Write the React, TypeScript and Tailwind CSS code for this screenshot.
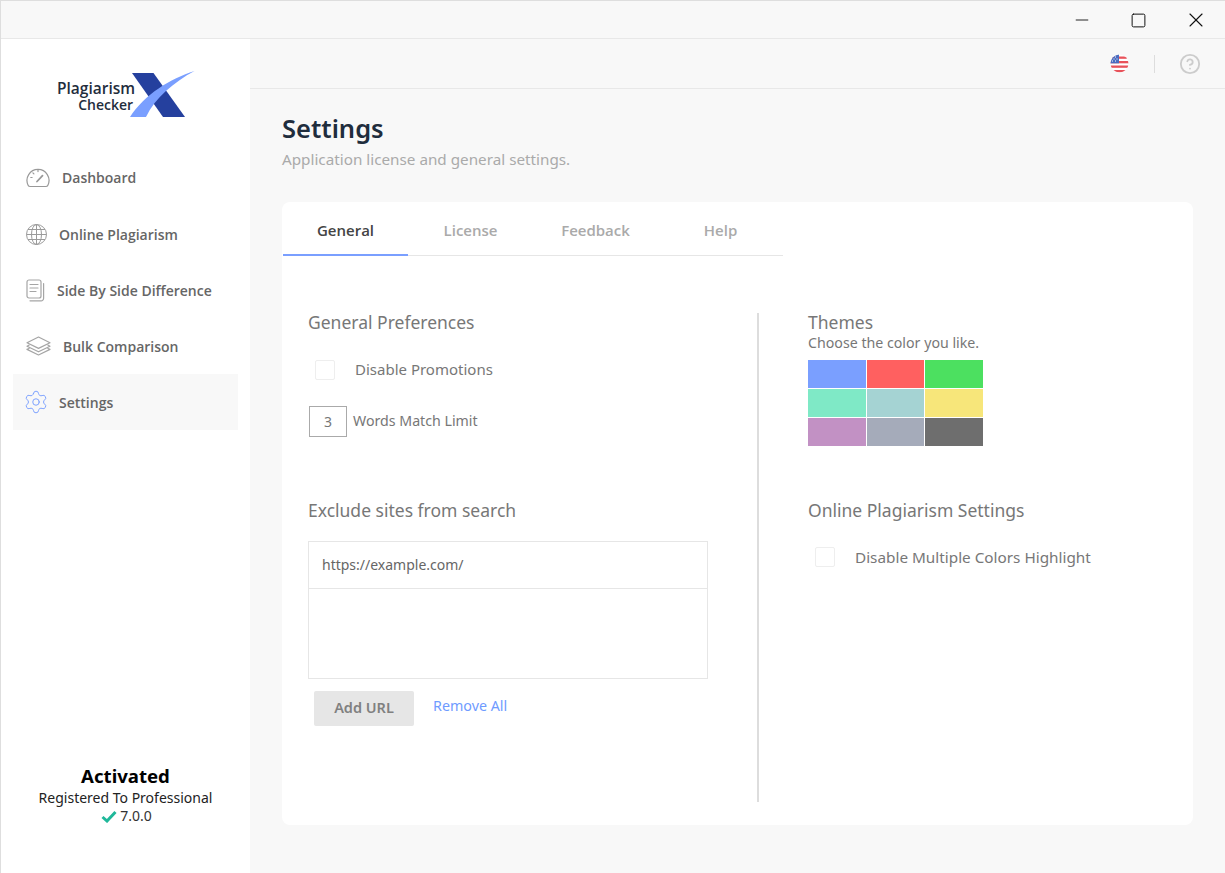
import { Settings as Gear, CircleHelp, Minus, Square, X } from "lucide-react";

const font = "[font-family:'Open_Sans','Noto_Sans',sans-serif]";
const ui = "[font-family:'Noto_Sans','Open_Sans',sans-serif]";

function GaugeIcon() {
  return (
    <svg width="24" height="22" viewBox="0 0 24 22" fill="none" stroke="#999999" strokeWidth="1.2" strokeLinecap="round">
      <path d="M4.2 20.5h15.6c1 0 1.7-.4 2.1-1.3A11 11 0 1 0 2.1 19.2c.4.9 1.1 1.3 2.1 1.3z" />
      <path d="M11 15.5l5.5-5.8" strokeWidth="1.8" />
      <path d="M12 4.2v1.4M4.8 11.500h1.3M6.900 6.900l1 1" />
    </svg>
  );
}

function GlobeIcon() {
  return (
    <svg width="21" height="21" viewBox="0 0 21 21" fill="none" stroke="#9a9a9a" strokeWidth="1">
      <circle cx="10.5" cy="10.5" r="10" />
      <ellipse cx="10.5" cy="10.5" rx="5" ry="10" />
      <path d="M10.5.5v20M.5 10.500h20M2 5.500h17M2 15.500h17" />
    </svg>
  );
}

function DocsIcon() {
  return (
    <svg width="19" height="23" viewBox="0 0 19 23" fill="none" stroke="#a5a5a5" strokeWidth="1.2" strokeLinecap="round" strokeLinejoin="round">
      <rect x="1" y="1" width="14" height="18" rx="2" />
      <path d="M17.600 4.500v14.800a2.500 2.500 0 0 1-2.500 2.500H4" />
      <path d="M4 5.500h8M4 9h8M4 12.500h6" />
    </svg>
  );
}

function LayersIcon() {
  return (
    <svg width="25" height="20" viewBox="0 0 25 20" fill="none" stroke="#a5a5a5" strokeWidth="1.2" strokeLinejoin="round">
      <path d="M12.500 1L24 6.800l-11.500 5.600L1 6.800z" />
      <path d="M3.600 8.800L1 10.200l11.500 5.600L24 10.200l-2.600-1.400" />
      <path d="M3.600 12.200L1 13.400 12.500 19 24 13.400l-2.600-1.200" />
    </svg>
  );
}

function Flag() {
  return (
    <svg width="19" height="19" viewBox="0 0 19 19">
      <defs>
        <clipPath id="flag-circle">
          <circle cx="9.500" cy="9.500" r="9" />
        </clipPath>
      </defs>
      <g clipPath="url(#flag-circle)">
        <rect width="19" height="19" fill="#fff" />
        <rect y="2.500" width="19" height="2.300" fill="#e8525a" />
        <rect y="7" width="19" height="2.300" fill="#e8525a" />
        <rect y="11.500" width="19" height="2.300" fill="#e8525a" />
        <rect y="16" width="19" height="2.300" fill="#e8525a" />
        <rect x="0" y="0" width="9" height="9.300" fill="#4a6cc0" />
        <path d="M2 3h1M5 3h1M3.500 5h1M6.500 5h1M2 7h1M5 7h1" stroke="#fff" strokeWidth="1" />
      </g>
    </svg>
  );
}

function Logo() {
  return (
    <div className="flex h-[111px] pl-[56px] pt-[31px]">
      <div className={`flex flex-col items-end pt-[10px] text-[#1f2d3d] font-semibold ${font}`}>
        <span className="h-[17px] text-[15.5px] leading-[17px]">Plagiarism</span>
        <span className="mr-[2px] h-[16px] text-[14px] leading-[16px]">Checker</span>
      </div>
      <svg className="-ml-[5px] shrink-0" width="65" height="48" viewBox="0 0 65 48">
        <path d="M2 3h21.500L55 47H33z" fill="#25409e" />
        <path d="M64.500 1C40 9 15 24 0 47h16C25 28 44 12 64.500 1z" fill="#7a9fff" />
      </svg>
    </div>
  );
}

const nav = [
  { label: "Dashboard", icon: <GaugeIcon />, iconW: "w-[36px]", extra: "pb-[2px]" },
  { label: "Online Plagiarism", icon: <GlobeIcon />, iconW: "w-[33px]", extra: "" },
  { label: "Side By Side Difference", icon: <DocsIcon />, iconW: "w-[31px]", extra: "" },
  { label: "Bulk Comparison", icon: <LayersIcon />, iconW: "w-[37px]", extra: "" },
  {
    label: "Settings",
    icon: <Gear className="-ml-[3px]" size={26} strokeWidth={0.9} color="#7a9fff" />,
    iconW: "w-[33px]",
    extra: "bg-[#f8f8f8]",
  },
];

function Sidebar() {
  return (
    <aside className="flex h-full w-[249px] shrink-0 flex-col bg-white">
      <Logo />
      <nav className="flex flex-col pl-[12px] pr-[12px]">
        {nav.map((n) => (
          <div key={n.label} className={`flex h-[56px] items-center pl-[13px] ${n.extra}`}>
            <span className={`flex shrink-0 items-center ${n.iconW}`}>{n.icon}</span>
            <span className={`text-[14px] font-semibold text-[#666666] ${font}`}>{n.label}</span>
          </div>
        ))}
      </nav>
      <div className={`mt-auto flex flex-col items-center pb-[48px] ${ui}`}>
        <span className="mb-[1px] h-[24px] text-[18.6px] font-bold leading-[24px] text-black">Activated</span>
        <span className="h-[18px] text-[14px] leading-[18px] text-[#222222]">Registered To Professional</span>
        <span className="ml-[2px] flex h-[18px] items-center gap-[3px] text-[14px] leading-[18px] text-[#333333]">
          <svg width="16" height="13" viewBox="0 0 16 13">
            <path d="M1.500 7l4.500 4 8.500-9" fill="none" stroke="#1fb89a" strokeWidth="3" />
          </svg>
          7.0.0
        </span>
      </div>
    </aside>
  );
}

function Check() {
  return <span className="h-[20px] w-[20px] shrink-0 rounded-[2px] border border-[#eeeeee] bg-white" />;
}

function Heading({ children }: { children: string }) {
  return <div className="h-[24px] text-[17.5px] leading-[22px] text-[#777777]">{children}</div>;
}

const themes = [
  "bg-[#7a9fff]", "bg-[#ff6060]", "bg-[#4ce060]",
  "bg-[#7fe9c6]", "bg-[#a5d3d3]", "bg-[#f7e67a]",
  "bg-[#c291c4]", "bg-[#a5abba]", "bg-[#6e6e6e]",
];

function General() {
  return (
    <div className={`mt-[57px] flex ${ui}`}>
      <div className="ml-[26px] w-[449px] shrink-0 -mt-[2px]">
        <Heading>General Preferences</Heading>
        <div className="ml-[7px] mt-[25px] flex h-[20px] items-center">
          <Check />
          <span className="ml-[20px] pb-[2px] text-[15px] text-[#777777]">Disable Promotions</span>
        </div>
        <div className="ml-[1px] mt-[26px] flex h-[31px] items-center">
          <div className="flex h-[31px] w-[38px] items-center justify-center border border-[#aaaaaa] text-[14px] text-[#777777]">3</div>
          <span className="ml-[6px] pb-[2px] text-[14.2px] text-[#777777]">Words Match Limit</span>
        </div>
        <div className="mt-[62px]">
          <Heading>Exclude sites from search</Heading>
        </div>
        <div className="mt-[18px] h-[138px] w-[400px] border border-[#e6e6e6]">
          <div className="flex h-[47px] items-center border-b border-[#e6e6e6] pb-[2px] pl-[13px] text-[14px] text-[#666666]">https://example.com/</div>
        </div>
        <div className="ml-[6px] mt-[12px] flex items-start">
          <button className="h-[35px] w-[100px] rounded-[2px] bg-[#e6e6e6] pb-[2px] text-[14.5px] font-semibold text-[#808080]">Add URL</button>
          <span className="ml-[19px] mt-[4px] text-[14.3px] text-[#6f9bff]">Remove All</span>
        </div>
      </div>
      <div className="h-[489px] w-[2px] shrink-0 bg-[#dddddd]" />
      <div className="ml-[49px] -mt-[2px] flex-1">
        <Heading>Themes</Heading>
        <div className="h-[16px] text-[14.2px] leading-[16px] text-[#777777]">Choose the color you like.</div>
        <div className="mt-[9px] grid w-[175px] grid-cols-[58px_57px_58px] grid-rows-[28px_28px_28px] gap-[1px]">
          {themes.map((c) => (
            <div key={c} className={c} />
          ))}
        </div>
        <div className="mt-[53px]">
          <Heading>Online Plagiarism Settings</Heading>
        </div>
        <div className="ml-[7px] mt-[24px] flex h-[20px] items-center">
          <Check />
          <span className="ml-[20px] text-[15.3px] text-[#777777]">Disable Multiple Colors Highlight</span>
        </div>
      </div>
    </div>
  );
}

function Tabs() {
  const tabs = ["General", "License", "Feedback", "Help"];
  return (
    <div className="ml-[1px] flex h-[54px] w-[500px] border-b border-[#e6e6e6]">
      {tabs.map((t, i) => (
        <div
          key={t}
          className={`flex h-[54px] w-[125px] items-center justify-center border-b-2 pt-[4px] text-[15px] font-semibold ${font} ${
            i === 0 ? "border-[#7a9fff] text-[#444444]" : "border-transparent text-[#aaaaaa]"
          }`}
        >
          {t}
        </div>
      ))}
    </div>
  );
}

export default function App() {
  return (
    <div className="flex h-[873px] w-[1225px] flex-col overflow-hidden border-t border-l border-[#dedede] bg-[#f8f8f8]">
      <header className="flex h-[38px] shrink-0 items-center justify-end border-b border-[#e8e8e8] pr-[17px] pt-[1px]">
        <Minus size={20} strokeWidth={1.1} color="#111" />
        <Square className="ml-[38px]" size={17} strokeWidth={1.4} color="#111" />
        <X className="ml-[37px]" size={24} strokeWidth={1.1} color="#111" />
      </header>
      <div className="flex min-h-0 flex-1">
        <Sidebar />
        <main className="flex min-w-0 flex-1 flex-col">
          <div className="flex h-[50px] shrink-0 items-center justify-end border-b border-[#e8e8e8] pr-[24px]">
            <Flag />
            <span className="ml-[25px] h-[18px] w-[1px] bg-[#dddddd]" />
            <CircleHelp className="ml-[24px]" size={22} strokeWidth={2} color="#cccccc" />
          </div>
          <div className="px-[32px]">
            <h1 className={`mt-[20px] h-[38px] text-[25.5px] font-semibold leading-[38px] text-[#1f2d3d] ${ui}`}>Settings</h1>
            <p className={`mt-[2px] h-[20px] text-[15.25px] leading-[20px] text-[#aaaaaa] ${ui}`}>Application license and general settings.</p>
            <section className="mt-[33px] h-[623px] rounded-lg bg-white">
              <Tabs />
              <General />
            </section>
          </div>
        </main>
      </div>
    </div>
  );
}
